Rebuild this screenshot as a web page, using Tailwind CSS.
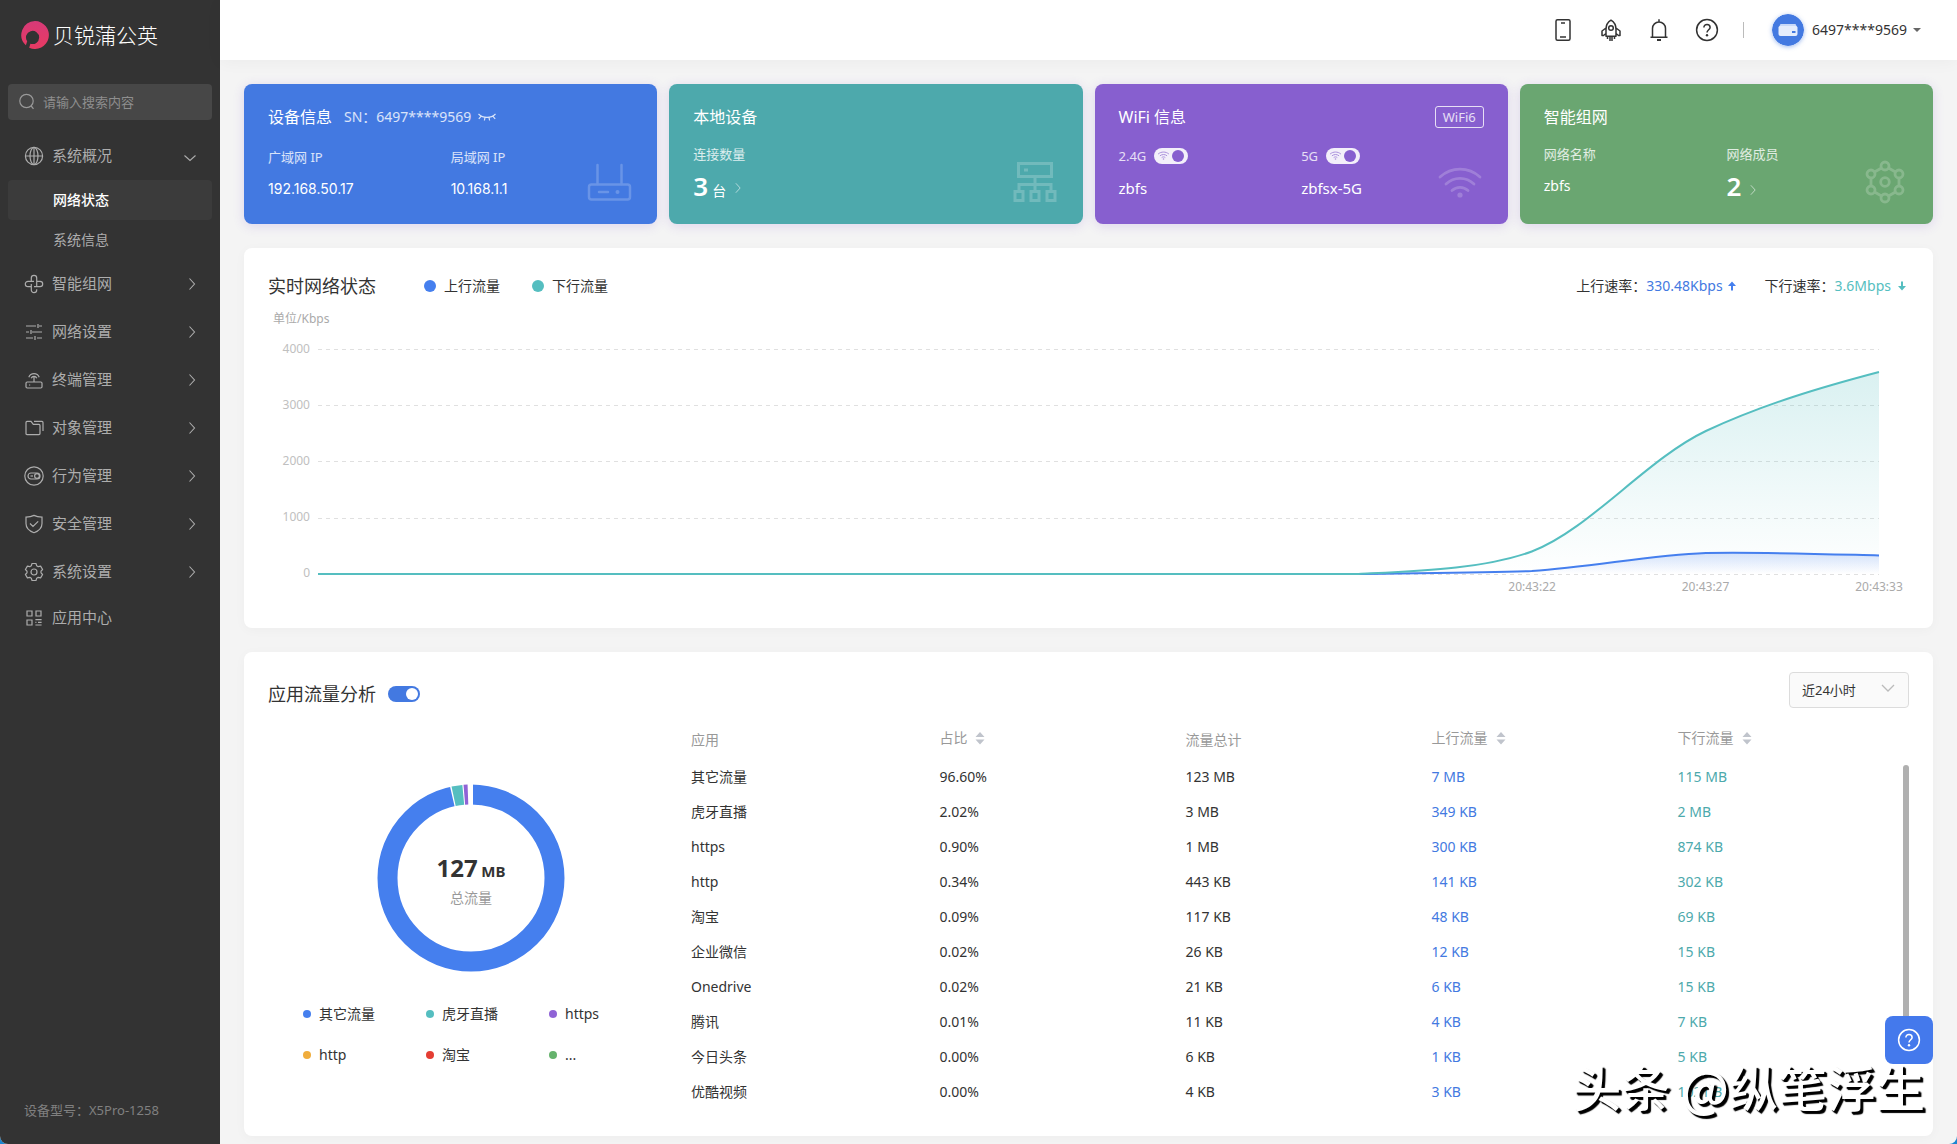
<!DOCTYPE html>
<html lang="zh-CN">
<head>
<meta charset="utf-8">
<title>贝锐蒲公英 - 网络状态</title>
<script src="https://cdn.jsdelivr.net/npm/@tailwindcss/browser@4"></script>
</head>
<body class="bg-[#1a86d0] font-['Noto_Sans','Noto_Sans_CJK_SC',sans-serif] text-sm text-[#333]">
<svg class="hidden" aria-hidden="true">
  <symbol id="chev-right" viewBox="0 0 8 14"><path d="M1.5 1.5 6.5 7l-5 5.5" fill="none" stroke="currentColor" stroke-width="1.1"/></symbol>
  <symbol id="wifi-sm" viewBox="0 0 14 10"><g fill="none" stroke="currentColor" stroke-width="1.1"><path d="M1 3.4c3.600-3 8.400-3 12 0M3 5.400c2.400-2 5.600-2 8 0M5 7.300c1.200-1 2.800-1 4 0"/></g><circle cx="7" cy="8.900" r=".9" fill="currentColor"/></symbol>
  <symbol id="help" viewBox="0 0 24 24"><g fill="none" stroke="currentColor" stroke-width="1.500"><circle cx="12" cy="12" r="10.400"/><path d="M8.900 9.600c0-1.900 1.300-3.100 3.100-3.100s3.100 1.200 3.100 2.900c0 2.200-3.100 2.500-3.100 5.100"/></g><circle cx="12" cy="17.300" r="1.200" fill="currentColor"/></symbol>
  <symbol id="sort" viewBox="0 0 10 14"><path d="M5 1l4.500 5H.5zM5 13.500l4.500-5H.5z" fill="#c0c4cc"/></symbol>
</svg>

<div class="flex min-h-screen overflow-hidden rounded-b-lg bg-[#f4f4f4]">
  <aside class="flex w-[220px] shrink-0 flex-col bg-[#333] px-2 pb-6 text-[15px] text-[#adadad]">
    <a href="#" class="flex h-[70px] items-center gap-1 pl-[13px] text-[21px] leading-7 font-light text-white">
      <svg class="size-7" viewBox="0 0 28 28"><defs><linearGradient id="lg" x1="0" y1="0" x2="0" y2="1"><stop offset="0" stop-color="#d63a78"/><stop offset="1" stop-color="#e83a62"/></linearGradient></defs><path d="M14 0a14 14 0 1 1-5.800 26.800l1.200-4.100a6.600 6.600 0 1 0-3.200-2.400l-1.300 4A14 14 0 0 1 14 0z" fill="url(#lg)"/></svg>
      贝锐蒲公英
    </a>
    <label class="mt-[14px] flex h-9 items-center gap-[7px] rounded bg-[#474747] pl-2.5">
      <svg class="size-[18px] shrink-0 text-[#999]" viewBox="0 0 18 18" fill="none" stroke="currentColor" stroke-width="1.200"><circle cx="8.500" cy="8" r="6.700"/><path d="m13.200 13 2.300 2.800"/></svg>
      <input type="text" aria-label="搜索" placeholder="请输入搜索内容" class="w-full min-w-0 bg-transparent text-[13px] leading-5 placeholder-[#8e8e8e] outline-none">
    </label>
    <nav class="mt-3 flex flex-col">
      <button class="flex h-12 items-center gap-2 pr-4 pl-4 text-left">
        <svg class="size-5" viewBox="0 0 20 20" fill="none" stroke="currentColor" stroke-width="1.200"><circle cx="10" cy="10" r="8.600"/><ellipse cx="10" cy="10" rx="4" ry="8.600"/><path d="M10 1.400v17.200M1.400 10h17.200"/></svg>
        <span class="grow">系统概况</span>
        <svg class="mt-1 h-2 w-3" viewBox="0 0 12 8" fill="none" stroke="currentColor" stroke-width="1.100"><path d="M.5 1.500 6 6.500l5.500-5"/></svg>
      </button>
      <a href="#" class="flex h-10 items-center rounded bg-[#3b3b3b] pl-[45px] text-sm font-medium text-white">网络状态</a>
      <a href="#" class="flex h-10 items-center pl-[45px] text-sm">系统信息</a>
      <button class="flex h-12 items-center gap-2 pr-4 pl-4 text-left">
        <svg class="size-5" viewBox="0 0 20 20" fill="none" stroke="currentColor" stroke-width="1.200"><path d="M7.300 7.300V4a2.700 2.700 0 0 1 5.400 0v8.700M12.700 7.300H16a2.700 2.700 0 0 1 0 5.400H10M12.700 15.200V16a2.700 2.700 0 0 1-5.400 0V10M7.300 12.700H4a2.700 2.700 0 0 1 0-5.400h6"/></svg>
        <span class="grow">智能组网</span><svg class="h-3.5 w-2"><use href="#chev-right"/></svg>
      </button>
      <button class="flex h-12 items-center gap-2 pr-4 pl-4 text-left">
        <svg class="size-5" viewBox="0 0 20 20" fill="none" stroke="currentColor" stroke-width="1.200"><path d="M2 4h10M15 4h3M14 2v4M2 10h3M8 10h10M7 8v4M2 16h7M13 16h5M11 14v4"/></svg>
        <span class="grow">网络设置</span><svg class="h-3.5 w-2"><use href="#chev-right"/></svg>
      </button>
      <button class="flex h-12 items-center gap-2 pr-4 pl-4 text-left">
        <svg class="size-5" viewBox="0 0 20 20" fill="none" stroke="currentColor" stroke-width="1.200"><rect x="2" y="12" width="16" height="6" rx="1.200"/><path d="M10 12V7M4.800 7.200a5.600 5.600 0 0 1 10.400 0M7.200 8.200a3 3 0 0 1 5.600 0M5 15h1.200"/></svg>
        <span class="grow">终端管理</span><svg class="h-3.5 w-2"><use href="#chev-right"/></svg>
      </button>
      <button class="flex h-12 items-center gap-2 pr-4 pl-4 text-left">
        <svg class="size-5" viewBox="0 0 20 20" fill="none" stroke="currentColor" stroke-width="1.200"><path d="M2 4.400c0-.6.400-1 1-1h4l2.300 3H15c.6 0 1 .4 1 1v8.200c0 .6-.4 1-1 1H3c-.6 0-1-.4-1-1zM10 3.400h8c.6 0 1 .4 1 1V13"/></svg>
        <span class="grow">对象管理</span><svg class="h-3.5 w-2"><use href="#chev-right"/></svg>
      </button>
      <button class="flex h-12 items-center gap-2 pr-4 pl-4 text-left">
        <svg class="size-5" viewBox="0 0 20 20" fill="none" stroke="currentColor" stroke-width="1.200"><circle cx="10" cy="10" r="9.200"/><rect x="4" y="7" width="12" height="6" rx="3"/><circle cx="13" cy="10" r="2.400"/><path d="M6.500 10h2.500"/></svg>
        <span class="grow">行为管理</span><svg class="h-3.5 w-2"><use href="#chev-right"/></svg>
      </button>
      <button class="flex h-12 items-center gap-2 pr-4 pl-4 text-left">
        <svg class="size-5" viewBox="0 0 20 20" fill="none" stroke="currentColor" stroke-width="1.200"><path d="M10 1.400c2.400 1.200 5 1.700 8 1.800v6.300c0 4.500-3.200 7.500-8 9.200-4.800-1.700-8-4.700-8-9.200V3.200c3-.1 5.600-.6 8-1.800zM6 9.500l3 3L14.200 7.400"/></svg>
        <span class="grow">安全管理</span><svg class="h-3.5 w-2"><use href="#chev-right"/></svg>
      </button>
      <button class="flex h-12 items-center gap-2 pr-4 pl-4 text-left">
        <svg class="size-5" viewBox="0 0 20 20" fill="none" stroke="currentColor" stroke-width="1.200" stroke-linejoin="round"><path d="M8 1.500h4l.7 2.300 1.500.9 2.400-.6 2 3.400L17 9.200v1.600l1.600 1.700-2 3.400-2.400-.6-1.500.9-.7 2.300H8l-.7-2.300-1.500-.9-2.400.6-2-3.400L3 10.800V9.200L1.400 7.500l2-3.400 2.400.6 1.500-.9z"/><circle cx="10" cy="10" r="3"/></svg>
        <span class="grow">系统设置</span><svg class="h-3.5 w-2"><use href="#chev-right"/></svg>
      </button>
      <a href="#" class="flex h-11 items-center gap-2 pl-4">
        <svg class="size-5" viewBox="0 0 20 20" fill="none" stroke="currentColor" stroke-width="1.200"><path d="M3 3h5v5H3zM12 3h5v5h-5zM3 12h5v5H3zM11.400 11.600h6.200M14 14.300h3.600M11.400 14.300h1M11.400 17h6.200"/></svg>
        应用中心
      </a>
    </nav>
    <p class="mt-auto pl-4 text-[13px] leading-5 text-[#808080]">设备型号：X5Pro-1258</p>
  </aside>

  <div class="flex min-w-0 grow flex-col">
    <header class="flex h-[60px] items-center justify-end gap-6 bg-white pr-9 shadow-[0_2px_16px_rgba(0,0,0,0.04)]">
      <button aria-label="手机"><svg class="size-6" viewBox="0 0 24 24" fill="none" stroke="currentColor" stroke-width="1.500"><rect x="5" y="1.700" width="14" height="20.600" rx="1.500"/><path d="M10 5h4M9 19h6"/></svg></button>
      <button aria-label="升级"><svg class="size-6" viewBox="0 0 24 24" fill="none" stroke="currentColor" stroke-width="1.500" stroke-linejoin="round"><path d="M12 2.200c3 1.800 5 5 5 9v7H7v-7c0-4 2-7.200 5-9zM7 10l-4 3v4.500h1.500L7 15.500M17 10l4 3v4.500h-1.500L17 15.500M8.500 18.500V21M11 18.500V23M13 18.500V23M15.500 18.500V21"/><circle cx="12" cy="10" r="2.300"/></svg></button>
      <button aria-label="通知"><svg class="size-6" viewBox="0 0 24 24" fill="none" stroke="currentColor" stroke-width="1.500"><path d="M3.500 19.200h17M5.500 19V10.500a6.500 6.500 0 0 1 13 0V19M12 4V1.300"/><path d="M10 22h4" stroke-width="2"/></svg></button>
      <button aria-label="帮助"><svg class="size-6"><use href="#help"/></svg></button>
      <span class="h-4 w-px bg-[#bbb]"></span>
      <button class="ml-1 flex items-center gap-2">
        <svg class="size-8 rounded-full shadow-[0_1px_4px_rgba(67,121,225,0.5)]" viewBox="0 0 32 32"><circle cx="16" cy="16" r="16" fill="#4379e1"/><path d="M8.500 10h15l2 4H6.500z" fill="#c7d8f8"/><rect x="6.500" y="12" width="19" height="10" rx="2" fill="#e4ecfc"/><rect x="20" y="17" width="3.500" height="2" fill="#4379e1"/></svg>
        <span class="leading-5">6497****9569</span>
        <svg class="-ml-0.5 h-1 w-2" viewBox="0 0 8 4"><path d="M0 0h8L4 4z" fill="#666"/></svg>
      </button>
    </header>

    <main class="flex grow flex-col gap-6 px-6 pt-6 pb-2">
      <section class="grid grid-cols-4 gap-3 text-white">
        <article class="relative h-[140px] rounded-lg bg-[#4379e1] px-6 pt-[22px] shadow-[0_2px_12px_rgba(103,58,200,0.16)]">
          <div class="flex h-[22px] items-center gap-3"><h2 class="text-base leading-[22px]">设备信息</h2><span class="text-white/80">SN：6497****9569</span>
            <button aria-label="显示序列号" class="-ml-1.5"><svg class="h-3 w-5" viewBox="0 0 20 12" fill="none" stroke="#fff" stroke-opacity=".8" stroke-width="1.200"><path d="M1.500 3c4.500 4.500 12.500 4.500 17 0M4 5.300 1.800 7.800M16 5.300l2.200 2.500M8 6.300l-.6 3.200M12 6.300l.6 3.200"/></svg></button></div>
          <dl class="mt-[19px] grid grid-cols-2">
            <div><dt class="text-[13px] leading-5 text-white/80">广域网 IP</dt><dd class="mt-3 font-['Inter'] leading-5">192.168.50.17</dd></div>
            <div><dt class="text-[13px] leading-5 text-white/80">局域网 IP</dt><dd class="mt-3 font-['Inter'] leading-5">10.168.1.1</dd></div>
          </dl>
          <svg class="absolute right-6 bottom-[18px] size-12 opacity-20" viewBox="0 0 48 48" fill="none" stroke="#fff" stroke-width="2.500" stroke-linecap="round"><rect x="4" y="26.500" width="41" height="15" rx="2.500"/><path d="M12.500 26V7M36.500 26V7M14 34h9"/><circle cx="32.500" cy="34" r="2" fill="#fff" stroke="none"/></svg>
        </article>

        <article class="relative h-[140px] rounded-lg bg-[#4da9ac] px-6 pt-[22px] shadow-[0_2px_12px_rgba(103,58,200,0.16)]">
          <h2 class="text-base leading-[22px]">本地设备</h2>
          <p class="mt-4 text-[13px] leading-5 text-white/80">连接数量</p>
          <a href="#" class="mt-1.5 inline-flex h-8 items-baseline"><span class="text-[26px] leading-8 font-semibold">3</span><span class="ml-1">台</span><svg class="mt-1 ml-2 h-3 w-2 self-center opacity-60"><use href="#chev-right"/></svg></a>
          <svg class="absolute right-6 bottom-[18px] size-12 opacity-20" viewBox="0 0 48 48" fill="none" stroke="#fff" stroke-width="3"><rect x="7.500" y="5.500" width="33" height="13"/><path d="M13 12h4M24 19v14M8 33v-6.500h32V33"/><path d="M4 33.500h8v9H4zM20 33.500h8v9h-8zM36 33.500h8v9h-8z"/></svg>
        </article>

        <article class="relative h-[140px] rounded-lg bg-[#875fcf] px-6 pt-[22px] shadow-[0_2px_12px_rgba(103,58,200,0.16)]">
          <div class="flex h-[22px] items-center justify-between"><h2 class="text-base leading-[22px]">WiFi 信息</h2><span class="rounded-[3px] border border-white/80 px-[7px] text-[13px] leading-5 text-white/80">WiFi6</span></div>
          <dl class="mt-[18px] grid grid-cols-2">
            <div><dt class="flex h-5 items-center gap-2 text-[13px] text-white/80"><label for="g24">2.4G</label><span class="relative flex"><input id="g24" type="checkbox" checked class="h-4 w-[34px] appearance-none rounded-full bg-[#f3effa] before:ml-[18px] before:mt-0.5 before:block before:size-3 before:rounded-full before:bg-[#875fcf]"><svg class="pointer-events-none absolute top-[3px] left-[3px] h-[9px] w-[13px] text-[#a98fdc]"><use href="#wifi-sm"/></svg></span></dt><dd class="mt-3 text-[15px] leading-5">zbfs</dd></div>
            <div><dt class="flex h-5 items-center gap-2 text-[13px] text-white/80"><label for="g5">5G</label><span class="relative flex"><input id="g5" type="checkbox" checked class="h-4 w-[34px] appearance-none rounded-full bg-[#f3effa] before:ml-[18px] before:mt-0.5 before:block before:size-3 before:rounded-full before:bg-[#875fcf]"><svg class="pointer-events-none absolute top-[3px] left-[3px] h-[9px] w-[13px] text-[#a98fdc]"><use href="#wifi-sm"/></svg></span></dt><dd class="mt-3 text-[15px] leading-5">zbfsx-5G</dd></div>
          </dl>
          <svg class="absolute right-6 bottom-[18px] size-12 opacity-20" viewBox="0 0 48 48" fill="none" stroke="#fff" stroke-width="2.800" stroke-linecap="round"><path d="M4 19c11.500-10.500 28.500-10.500 40 0M10 26c8-7.600 20-7.600 28 0M16 32.500c4.500-4.300 11.500-4.300 16 0"/><circle cx="24" cy="37" r="2.600" fill="#fff" stroke="none"/></svg>
        </article>

        <article class="relative h-[140px] rounded-lg bg-[#6aa671] px-6 pt-[22px] shadow-[0_2px_12px_rgba(103,58,200,0.16)]">
          <h2 class="text-base leading-[22px]">智能组网</h2>
          <dl class="mt-4 grid grid-cols-2">
            <div><dt class="text-[13px] leading-5 text-white/80">网络名称</dt><dd class="mt-3 leading-5">zbfs</dd></div>
            <div><dt class="text-[13px] leading-5 text-white/80">网络成员</dt><dd class="mt-1.5"><a href="#" class="flex h-8 items-center gap-2 text-[26px] leading-8 font-semibold">2<svg class="mt-2 h-3 w-2 opacity-60"><use href="#chev-right"/></svg></a></dd></div>
          </dl>
          <svg class="absolute right-6 bottom-[18px] size-12 opacity-20" viewBox="0 0 48 48" fill="none" stroke="#fff" stroke-width="2.800"><circle cx="24" cy="24" r="4.300"/><circle cx="24" cy="8" r="4"/><circle cx="24" cy="40" r="4"/><circle cx="10" cy="16" r="4"/><circle cx="38" cy="16" r="4"/><circle cx="10" cy="32" r="4"/><circle cx="38" cy="32" r="4"/><path d="M10 20v8M38 20v8M13.500 14l7-4M34.500 14l-7-4M13.500 34l7 4M34.500 34l-7 4"/></svg>
        </article>
      </section>

      <section class="h-[380px] rounded-lg bg-white pt-6 pr-6 pl-6 shadow-[0_2px_12px_rgba(0,0,0,0.03)]">
        <div class="flex h-7 items-center">
          <h2 class="text-lg leading-7">实时网络状态</h2>
          <ul class="ml-12 flex gap-8">
            <li class="flex items-center gap-2"><i class="size-3 rounded-full bg-[#457fee]"></i>上行流量</li>
            <li class="flex items-center gap-2"><i class="size-3 rounded-full bg-[#55bec0]"></i>下行流量</li>
          </ul>
          <p class="ml-auto flex items-center">上行速率：<span class="text-[#4379e1]">330.48Kbps</span><svg class="ml-1 size-2.5" viewBox="0 0 10 10"><path d="M5 .5 9 5H6v4.500H4V5H1z" fill="#457fee"/></svg></p>
          <p class="mr-0.5 ml-7 flex items-center">下行速率：<span class="text-[#55bec0]">3.6Mbps</span><svg class="ml-1.5 size-2.5" viewBox="0 0 10 10"><path d="M5 9.500 1 5h3V.5h2V5h3z" fill="#55bec0"/></svg></p>
        </div>
        <p class="mt-[9px] pl-[5px] text-xs leading-5 text-[#aaa]">单位/Kbps</p>
        <div class="mt-2 flex pr-[30px]">
          <div class="flex h-[248px] w-[42px] shrink-0 flex-col justify-between text-right text-xs leading-6 text-[#c0c0c0]">
            <span>4000</span><span>3000</span><span>2000</span><span>1000</span><span>0</span>
          </div>
          <div class="relative ml-2 grow pt-3">
            <svg class="block h-[226px] w-full overflow-visible" viewBox="0 0 1560 226" preserveAspectRatio="none" role="img" aria-label="实时网络流量曲线">
              <defs>
                <linearGradient id="gt" x1="0" y1="23" x2="0" y2="225" gradientUnits="userSpaceOnUse"><stop offset="0" stop-color="#55bec0" stop-opacity=".22"/><stop offset="1" stop-color="#55bec0" stop-opacity="0"/></linearGradient>
                <linearGradient id="gb" x1="0" y1="204" x2="0" y2="225" gradientUnits="userSpaceOnUse"><stop offset="0" stop-color="#457fee" stop-opacity=".22"/><stop offset="1" stop-color="#457fee" stop-opacity="0"/></linearGradient>
              </defs>
              <path d="M0 .5H1560M0 56.500H1560M0 112.500H1560M0 169.500H1560M0 225.500H1560" stroke="#e0e0e0" stroke-dasharray="4 4" vector-effect="non-scaling-stroke"/>
              <path d="M1040 225C1100 222 1165 220 1213 202.500C1270 181 1328 110 1387 82C1445 55 1503 38 1560 23V225z" fill="url(#gt)"/>
              <path d="M1040 225C1100 224 1165 224 1213 222C1275 218 1330 206 1387 204C1445 203 1503 205 1560 206.500V225z" fill="url(#gb)"/>
              <path d="M0 225H1040C1100 224 1165 224 1213 222C1275 218 1330 206 1387 204C1445 203 1503 205 1560 206.500" fill="none" stroke="#457fee" stroke-width="2" vector-effect="non-scaling-stroke"/>
              <path d="M0 225H1040C1100 222 1165 220 1213 202.500C1270 181 1328 110 1387 82C1445 55 1503 38 1560 23" fill="none" stroke="#55bec0" stroke-width="2" vector-effect="non-scaling-stroke"/>
            </svg>
            <div class="relative h-6 text-xs leading-6 text-[#aaa]">
              <span class="absolute left-7/9 -translate-x-1/2">20:43:22</span><span class="absolute left-8/9 -translate-x-1/2">20:43:27</span><span class="absolute left-full -translate-x-1/2">20:43:33</span>
            </div>
          </div>
        </div>
      </section>

      <section class="relative grow rounded-lg bg-white px-6 pt-5 pb-[27px] shadow-[0_2px_12px_rgba(0,0,0,0.03)]">
        <div class="flex h-9 items-center">
          <label for="analysis" class="pt-2 text-lg leading-7">应用流量分析</label>
          <input id="analysis" type="checkbox" checked class="mt-2 ml-3 h-4 w-8 appearance-none rounded-full bg-[#4379e1] before:mt-0.5 before:ml-[18px] before:block before:size-3 before:rounded-full before:bg-white">
          <div class="relative ml-auto">
            <select aria-label="时间范围" class="block h-9 w-[120px] appearance-none rounded border border-[#dcdcdc] bg-[#fafafa] px-3 text-[13px]"><option>近24小时</option></select>
            <svg class="pointer-events-none absolute top-3 right-[14px] h-2 w-3.5" viewBox="0 0 14 8" fill="none" stroke="#bbb" stroke-width="1.300"><path d="m1 1 6 6 6-6"/></svg>
          </div>
        </div>
        <div class="mt-3 flex">
          <div class="w-[406px] shrink-0 pt-16">
            <div class="relative mx-auto size-[188px]">
              <svg class="size-full" viewBox="0 0 188 188" role="img" aria-label="流量占比">
                <circle cx="94" cy="94" r="83.500" fill="none" stroke="#457fee" stroke-width="20"/>
                <g transform="rotate(-90 94 94)" fill="none" stroke-width="20">
                  <circle cx="94" cy="94" r="83.500" stroke="#fff" stroke-width="22" pathLength="1000" stroke-dasharray="36 964" stroke-dashoffset="-964"/>
                  <path d="M104 94.500h86" stroke="#fff" stroke-width="3" transform="translate(62 0)"/>
                  <circle cx="94" cy="94" r="83.500" stroke="#55bec0" pathLength="1000" stroke-dasharray="18.500 981.500" stroke-dashoffset="-966.500"/>
                  <circle cx="94" cy="94" r="83.500" stroke="#8f63d6" pathLength="1000" stroke-dasharray="7 993" stroke-dashoffset="-987"/>
                </g>
              </svg>
              <div class="absolute inset-0 flex flex-col items-center pt-[68px]"><p class="leading-8 font-bold"><span class="text-2xl leading-8">127</span> <span class="text-[15px]">MB</span></p><p class="leading-5 text-[#999]">总流量</p></div>
            </div>
            <ul class="mt-8 ml-[35px] grid w-[369px] grid-cols-3 gap-y-[21px] leading-5">
              <li class="flex items-center gap-2"><i class="size-2 rounded-full bg-[#457fee]"></i>其它流量</li>
              <li class="flex items-center gap-2"><i class="size-2 rounded-full bg-[#55bec0]"></i>虎牙直播</li>
              <li class="flex items-center gap-2"><i class="size-2 rounded-full bg-[#8f63d6]"></i>https</li>
              <li class="flex items-center gap-2"><i class="size-2 rounded-full bg-[#f0ad3c]"></i>http</li>
              <li class="flex items-center gap-2"><i class="size-2 rounded-full bg-[#e43d33]"></i>淘宝</li>
              <li class="flex items-center gap-2"><i class="size-2 rounded-full bg-[#66b36d]"></i>...</li>
            </ul>
          </div>
          <table class="ml-[17px] grow table-fixed border-collapse text-left">
            <thead class="text-[#999]"><tr class="h-[39px]">
              <th class="w-[20.400%] p-0 font-normal">应用</th>
              <th class="w-[20.200%] p-0 pb-1 font-normal"><button class="flex items-center gap-2">占比<svg class="h-3.5 w-2.5"><use href="#sort"/></svg></button></th>
              <th class="w-[20.200%] p-0 font-normal">流量总计</th>
              <th class="w-[20.200%] p-0 pb-1 font-normal"><button class="flex items-center gap-2">上行流量<svg class="h-3.5 w-2.5"><use href="#sort"/></svg></button></th>
              <th class="p-0 pb-1 font-normal"><button class="flex items-center gap-2">下行流量<svg class="h-3.5 w-2.5"><use href="#sort"/></svg></button></th>
            </tr></thead>
            <tbody id="rows"></tbody>
          </table>
        </div>
        <div class="absolute top-[113px] right-6 bottom-[27px] w-1.5 rounded-full bg-[#b0b0b0] [clip-path:inset(0_0_80px_0)]"></div>
      </section>
    </main>
  </div>
</div>

<button aria-label="在线帮助" class="fixed right-6 bottom-20 flex size-12 items-center justify-center rounded-lg bg-[#4479ec] text-white"><svg class="size-6"><use href="#help"/></svg></button>
<p class="pointer-events-none fixed right-8 bottom-[26px] font-['Noto_Sans_CJK_SC',sans-serif] text-[49px] leading-[64px] font-medium whitespace-nowrap text-white [text-shadow:2px_2px_1px_#000,3px_3px_1px_#000]">头条 @纵笔浮生</p>

<script>
const data = [
  ['其它流量','96.60%','123 MB','7 MB','115 MB'],
  ['虎牙直播','2.02%','3 MB','349 KB','2 MB'],
  ['https','0.90%','1 MB','300 KB','874 KB'],
  ['http','0.34%','443 KB','141 KB','302 KB'],
  ['淘宝','0.09%','117 KB','48 KB','69 KB'],
  ['企业微信','0.02%','26 KB','12 KB','15 KB'],
  ['Onedrive','0.02%','21 KB','6 KB','15 KB'],
  ['腾讯','0.01%','11 KB','4 KB','7 KB'],
  ['今日头条','0.00%','6 KB','1 KB','5 KB'],
  ['优酷视频','0.00%','4 KB','3 KB','1021 B']
];
document.getElementById('rows').innerHTML = data.map(r =>
  `<tr class="h-[35px]"><td class="p-0">${r[0]}</td><td class="p-0">${r[1]}</td><td class="p-0">${r[2]}</td><td class="p-0 text-[#4379e1]">${r[3]}</td><td class="p-0 text-[#4da9ac]">${r[4]}</td></tr>`).join('');
</script>
</body>
</html>
